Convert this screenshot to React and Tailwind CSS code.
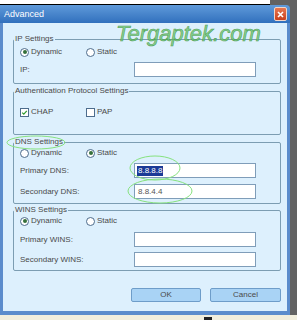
import React from "react";

const Radio = ({ checked, label }) => (
  <div className="flex items-center gap-[2px]">
    <div className="w-[9px] h-[9px] rounded-full border border-[#4d6c8c] bg-white flex items-center justify-center">
      {checked && <div className="w-[4px] h-[4px] rounded-full bg-[#35703a]" />}
    </div>
    <span>{label}</span>
  </div>
);

const Check = ({ checked, label }) => (
  <div className="flex items-center gap-[2px]">
    <div className="w-[9px] h-[9px] border border-[#4d6c8c] bg-white flex items-center justify-center">
      {checked && (
        <svg width="7" height="7" viewBox="0 0 7 7">
          <path d="M1.2 3.6 L2.8 5.1 L5.8 1.8" fill="none" stroke="#2d9a2d" strokeWidth="1.2" />
        </svg>
      )}
    </div>
    <span>{label}</span>
  </div>
);

const Field = ({ label, children }) => (
  <div className="flex items-center justify-between h-[15px] pr-[18px]">
    <span>{label}</span>
    <div className="w-[122px] h-[15px] bg-white border border-[#7f9db9] flex items-center px-[2px] text-[#555]">
      {children}
    </div>
  </div>
);

const Group = ({ title, className, children }) => (
  <fieldset className={`border border-[#7c9db2] rounded-[2px] p-0 m-0 min-w-0 ${className}`}>
    <legend className="ml-0 px-[1px] leading-[10px]">{title}</legend>
    {children}
  </fieldset>
);

const RadioRow = ({ dynamic }) => (
  <div className="flex items-center h-[10px]">
    <div className="w-[66px]">
      <Radio checked={dynamic} label="Dynamic" />
    </div>
    <Radio checked={!dynamic} label="Static" />
  </div>
);

export default function App() {
  return (
    <div className="w-[297px] h-[320px] bg-[#626262] flex flex-col overflow-hidden relative text-[8px] leading-[10px] text-[#4a4a4a] font-['Liberation_Sans',Arial,sans-serif]">
      <div className="h-[5px] flex shrink-0">
        <div className="w-[270px] bg-white border-b border-black" />
      </div>

      <div className="flex flex-col w-[290px] flex-1">
        {/* title bar */}
        <div className="h-[18px] shrink-0 bg-gradient-to-b from-[#5f9ada] to-[#3170bd] rounded-tr-[4px] flex items-center justify-between pl-[4px] pr-[3px]">
          <span className="text-white text-[9px]">Advanced</span>
          <div className="w-[13px] h-[14px] rounded-[2px] border border-[#f3d6c8] bg-gradient-to-b from-[#e8764f] to-[#c9401c] flex items-center justify-center">
            <svg width="7" height="7" viewBox="0 0 7 7">
              <path d="M1 1 L6 6 M6 1 L1 6" stroke="white" strokeWidth="1.6" />
            </svg>
          </div>
        </div>

        {/* body */}
        <div className="flex-1 border-x-[3px] border-b-[4px] border-[#5b8ccc] bg-[#ddf0fd] pl-[10px] pr-[6px] pt-[11px] pb-[9px] flex flex-col">
          <Group title="IP Settings" className="h-[50px]">
            <div className="px-[6px] pt-[3px] flex flex-col gap-[5px]">
              <RadioRow dynamic />
              <Field label="IP:" />
            </div>
          </Group>

          <Group title="Authentication Protocol Settings" className="h-[49px] mt-[2px]">
            <div className="px-[6px] pt-[11px] flex items-center h-[21px]">
              <div className="w-[66px]">
                <Check checked label="CHAP" />
              </div>
              <Check label="PAP" />
            </div>
          </Group>

          <Group title="DNS Settings" className="h-[67px] mt-[2px]">
            <div className="px-[6px] pt-[1px] flex flex-col">
              <RadioRow />
              <div className="mt-[5px]">
                <Field label="Primary DNS:">
                  <span className="bg-[#1c3a96] text-white px-[1px]">8.8.8.8</span>
                </Field>
              </div>
              <div className="mt-[6px]">
                <Field label="Secondary DNS:">
                  <span className="px-[1px]">8.8.4.4</span>
                </Field>
              </div>
            </div>
          </Group>

          <Group title="WINS Settings" className="h-[66px] mt-[1px]">
            <div className="px-[6px] pt-[1px] flex flex-col">
              <RadioRow dynamic />
              <div className="mt-[6px]">
                <Field label="Primary WINS:" />
              </div>
              <div className="mt-[5px]">
                <Field label="Secondary WINS:" />
              </div>
            </div>
          </Group>

          <div className="mt-[17px] flex justify-end gap-[9px] h-[14px]">
            <div className="w-[70px] bg-[#a9d3f5] border border-[#6e9dc9] rounded-[2px] flex items-center justify-center text-[#4a4a4a]">OK</div>
            <div className="w-[71px] bg-[#a9d3f5] border border-[#6e9dc9] rounded-[2px] flex items-center justify-center text-[#4a4a4a]">Cancel</div>
          </div>
        </div>
      </div>

      <div className="h-[5px] shrink-0 bg-[#f1eedd] flex">
        <div className="ml-[204px] mt-[2px] w-[8px] h-[3px] bg-[#222]" />
      </div>

      {/* watermark */}
      <div className="absolute left-[116px] top-[21px] text-[22px] leading-[26px] italic text-[#6cc66c]/75 [-webkit-text-stroke:0.6px_#4f9f55] pointer-events-none">
        Tergaptek.com
      </div>

      {/* green highlight ellipses */}
      <svg className="absolute left-0 top-0 pointer-events-none" width="297" height="320">
        <ellipse cx="36" cy="142.5" rx="29" ry="6.5" fill="none" stroke="#86e27e" strokeWidth="1" />
        <ellipse cx="155" cy="168" rx="25" ry="12" fill="none" stroke="#86e27e" strokeWidth="1" />
        <ellipse cx="160" cy="191" rx="32" ry="12" fill="none" stroke="#86e27e" strokeWidth="1" />
      </svg>
    </div>
  );
}
